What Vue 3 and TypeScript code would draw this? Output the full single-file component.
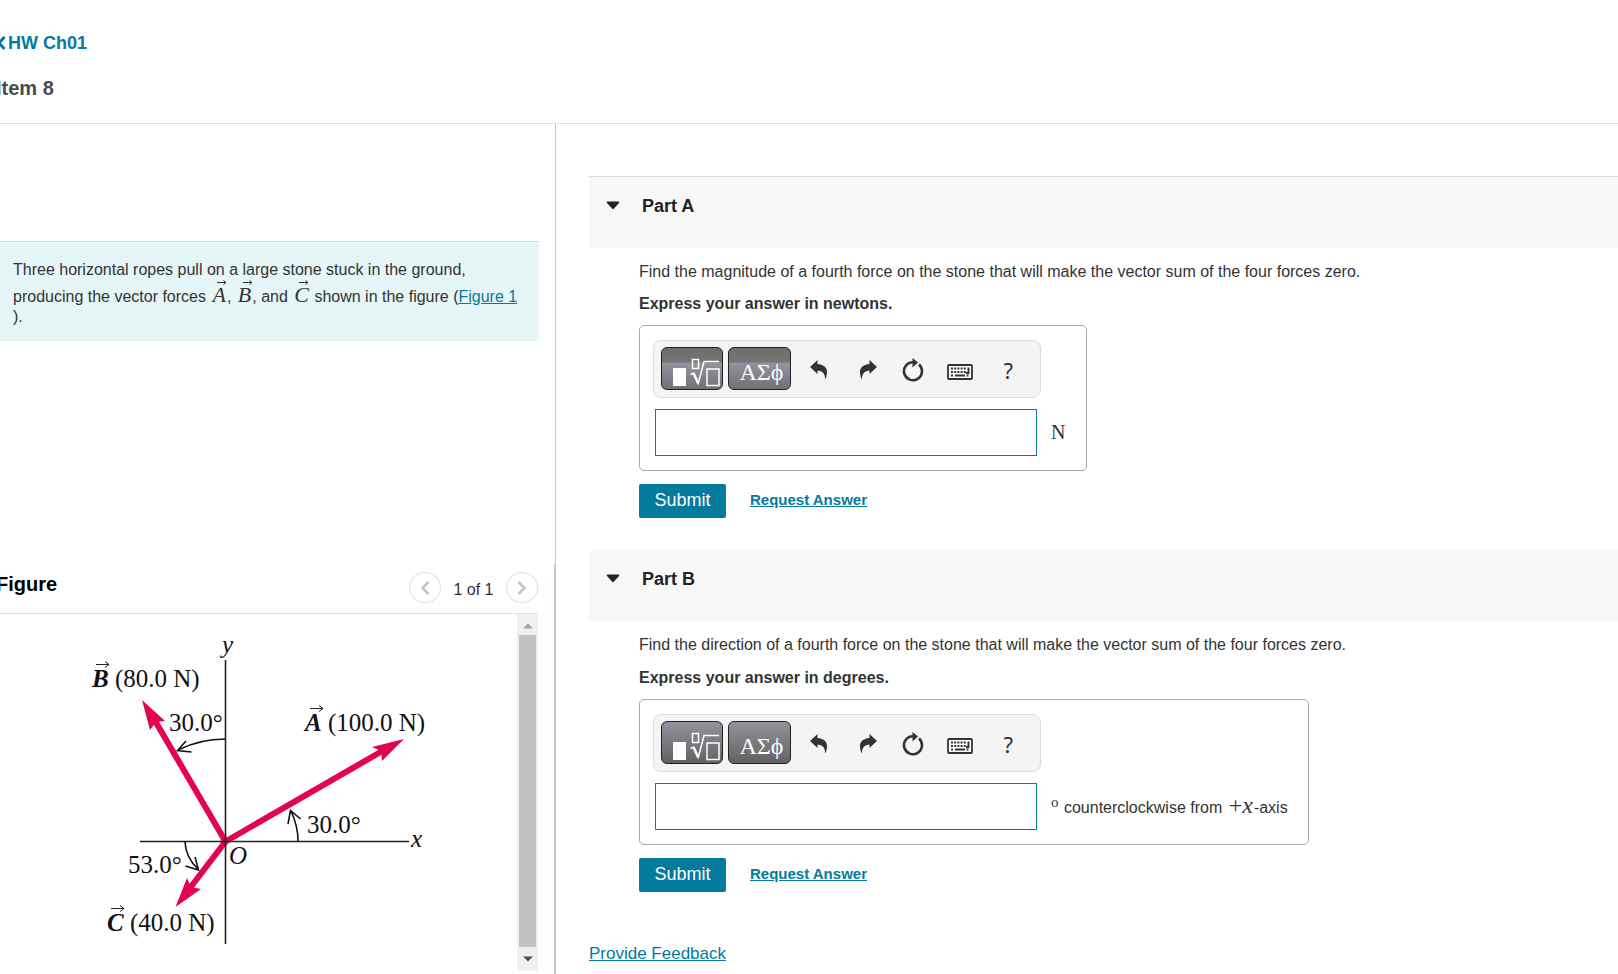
<script setup lang="ts">
import { ref } from 'vue'

interface Part {
  id: string
  title: string
  question: string
  instruction: string
  answer: string
}

const parts = ref<Part[]>([
  {
    id: 'a',
    title: 'Part A',
    question:
      'Find the magnitude of a fourth force on the stone that will make the vector sum of the four forces zero.',
    instruction: 'Express your answer in newtons.',
    answer: '',
  },
  {
    id: 'b',
    title: 'Part B',
    question:
      'Find the direction of a fourth force on the stone that will make the vector sum of the four forces zero.',
    instruction: 'Express your answer in degrees.',
    answer: '',
  },
])
</script>

<template>
  <div class="page">
    <header class="top">
      <a href="#" class="back">
        <svg width="10" height="16" viewBox="0 0 10 16" aria-hidden="true">
          <path d="M8.500 2 L3 8 L8.500 14" fill="none" stroke="currentColor" stroke-width="3" />
        </svg>
        <span>HW Ch01</span>
      </a>
      <h1 class="item">Item 8</h1>
    </header>

    <div class="columns">
      <aside class="left">
        <section class="upper">
          <div class="intro">
            Three horizontal ropes pull on a large stone stuck in the ground,<br />
            producing the vector forces
            <span class="vec">A<svg class="arrow" viewBox="0 0 10 5"><path d="M0 2.500H9M6.500 0.500L9 2.500L6.500 4.500" /></svg></span>,
            <span class="vec">B<svg class="arrow" viewBox="0 0 10 5"><path d="M0 2.500H9M6.500 0.500L9 2.500L6.500 4.500" /></svg></span>,
            and
            <span class="vec">C<svg class="arrow" viewBox="0 0 10 5"><path d="M0 2.500H9M6.500 0.500L9 2.500L6.500 4.500" /></svg></span>
            shown in the figure (<a href="#figure">Figure 1</a><br />).
          </div>
        </section>

        <section id="figure" class="figure">
          <div class="figure-head">
            <h2>Figure</h2>
            <div class="pager">
              <button type="button" class="round" aria-label="Previous figure">
                <svg width="12" height="16" viewBox="0 0 12 16"><path d="M9.500 2L3.500 8L9.500 14" /></svg>
              </button>
              <span class="count">1 of 1</span>
              <button type="button" class="round" aria-label="Next figure">
                <svg width="12" height="16" viewBox="0 0 12 16"><path d="M2.500 2L8.500 8L2.500 14" /></svg>
              </button>
            </div>
          </div>
          <div class="figure-body">
            <svg class="diagram" width="440" height="356" viewBox="0 614 440 356" role="img" aria-label="Vector forces A, B and C">
              <g class="axis">
                <path d="M225.500 660V944" />
                <path d="M140 841.500H409" />
              </g>
              <g class="force">
                <path d="M225.500 841.500L384 750" />
                <path d="M225.500 841.500L154 719" />
                <path d="M225.500 841.500L190 888" />
              </g>
              <g class="tips">
                <path d="M404 739L382 761L381 751L372 747Z" />
                <path d="M142 700L165 721L156 722L150 730Z" />
                <path d="M175.500 907L187 878L191 887L201 889Z" />
              </g>
              <path class="axis" d="M220 841.500H231M225.500 836V847" />
              <g class="angle">
                <path d="M225 739Q200 739 178 750M186 741L177.500 750.500L191.500 752" />
                <path d="M298 841Q298 826 291 811M288 824L290.500 810.500L300.500 819" />
                <path d="M185 842Q186 858 198 869M185.500 866L198.500 870L195 857" />
              </g>
              <g class="small-arrow">
                <path d="M96 664.500H109M105 661.500L109 664.500L105 667.500" />
                <path d="M310 708.500H323M319 705.500L323 708.500L319 711.500" />
                <path d="M111 908.500H124M120 905.500L124 908.500L120 911.500" />
              </g>
              <g class="label">
                <text x="222" y="653" class="it">y</text>
                <text x="411" y="847" class="it">x</text>
                <text x="229" y="864" class="it">O</text>
                <text x="92" y="687"><tspan class="bold">B</tspan> (80.0 N)</text>
                <text x="305" y="731"><tspan class="bold">A</tspan> (100.0 N)</text>
                <text x="107" y="931"><tspan class="bold">C</tspan> (40.0 N)</text>
                <text x="169" y="731">30.0°</text>
                <text x="307" y="833">30.0°</text>
                <text x="128" y="873">53.0°</text>
              </g>
            </svg>
            <div class="scrollbar" aria-hidden="true">
              <svg width="10" height="6" viewBox="0 0 10 6"><path d="M0 5.500L5 0.500L10 5.500Z" fill="#a3a3a3" /></svg>
              <div class="thumb"></div>
              <svg width="10" height="6" viewBox="0 0 10 6"><path d="M0 0.500L5 5.500L10 0.500Z" fill="#505050" /></svg>
            </div>
          </div>
        </section>
      </aside>

      <main class="right">
        <section v-for="part in parts" :key="part.id" :class="['part', 'part-' + part.id]">
          <h2 class="part-head">
            <svg width="14" height="9" viewBox="0 0 14 9" aria-hidden="true">
              <path d="M1.500 0.500H12.500Q14 0.500 13 2L8 7.500Q7 8.500 6 7.500L1 2Q0 0.500 1.500 0.500Z" fill="#222" />
            </svg>
            {{ part.title }}
          </h2>
          <div class="part-body">
            <p class="question">{{ part.question }}</p>
            <label class="instruction" :for="'answer-' + part.id">{{ part.instruction }}</label>
            <div class="answer-box">
              <div class="toolbar">
                <button type="button" class="dark" aria-label="Templates">
                  <svg width="60" height="40" viewBox="0 0 60 40">
                    <rect x="11" y="20" width="13" height="18" fill="#fff" />
                    <g fill="none" stroke="#fff">
                      <rect x="30.500" y="11.500" width="6" height="9" stroke-width="1.500" />
                      <path d="M28.500 26.500L32 25" stroke-width="1.500" />
                      <path d="M31.500 25L36 35" stroke-width="2.500" />
                      <path d="M36 36.500L42 13.500H57" stroke-width="1.500" />
                      <rect x="45" y="21" width="12" height="16.500" stroke-width="1.500" />
                    </g>
                  </svg>
                </button>
                <button type="button" class="dark symbols">ΑΣϕ</button>
                <button type="button" class="tool undo" aria-label="Undo">
                  <svg width="18" height="20" viewBox="0 0 18 20">
                    <path d="M0 7L7.500 0V4C14 4.500 17.500 8 17 13Q16.800 17 15 19.500Q15.500 11 7.500 10.500V14Z" fill="#333" />
                  </svg>
                </button>
                <button type="button" class="tool redo" aria-label="Redo">
                  <svg width="18" height="20" viewBox="0 0 18 20">
                    <path d="M18 7L10.500 0V4C4 4.500 0.500 8 1 13Q1.200 17 3 19.500Q2.500 11 10.500 10.500V14Z" fill="#333" />
                  </svg>
                </button>
                <button type="button" class="tool reset" aria-label="Reset">
                  <svg width="22" height="24" viewBox="0 0 22 24">
                    <path d="M17 6.500A9 9 0 1 1 11 4.200" fill="none" stroke="#333" stroke-width="2.600" />
                    <path d="M10.500 0L16 4.500L10.500 9.500Z" fill="#333" />
                  </svg>
                </button>
                <button type="button" class="tool keys" aria-label="Keyboard">
                  <svg width="26" height="16" viewBox="0 0 26 16">
                    <rect x="1" y="1" width="24" height="14" rx="1" fill="#fff" stroke="#333" stroke-width="1.800" />
                    <path d="M4 4.500H19M4 8H19M4 11.500H6M19.500 11.500H22" stroke="#333" stroke-width="2" stroke-dasharray="2 1.200" />
                    <path d="M8 11.500H18M21.500 3.500V9H19" fill="none" stroke="#333" stroke-width="2" />
                  </svg>
                </button>
                <button type="button" class="tool help" aria-label="Help">?</button>
              </div>
              <div class="entry">
                <input :id="'answer-' + part.id" v-model="part.answer" type="text" />
                <span v-if="part.id === 'a'" class="unit">N</span>
                <span v-else class="unit-text"><sup>o</sup> counterclockwise from <span class="math">+<i>x</i></span>-axis</span>
              </div>
            </div>
            <div class="actions">
              <button type="button" class="submit">Submit</button>
              <a href="#" class="request">Request Answer</a>
            </div>
          </div>
        </section>
        <a href="#" class="feedback">Provide Feedback</a>
      </main>
    </div>
  </div>
</template>

<style>
body {
  background: #fff;
}
</style>

<style scoped>
.page {
  height: 100vh;
  display: flex;
  flex-direction: column;
  overflow: hidden;
  font-family: "Liberation Sans", Arial, sans-serif;
  font-size: 16px;
  line-height: 20px;
  color: #333;
}
.page * {
  box-sizing: border-box;
}
a {
  color: #047a9c;
}
h1,
h2,
p {
  margin: 0;
}
button {
  font: inherit;
  padding: 0;
  border: 0;
  background: none;
  cursor: pointer;
}
.top {
  flex: none;
  border-bottom: 1px solid #dcdee0;
  padding: 33px 0 23px;
  display: flex;
  flex-direction: column;
  align-items: flex-start;
  gap: 23px;
  margin-left: -4px;
}
.back {
  display: flex;
  align-items: center;
  gap: 2px;
  font-size: 18px;
  font-weight: bold;
  text-decoration: none;
}
.item {
  font-size: 20px;
  line-height: 24px;
  color: #4b4b4b;
}
.columns {
  flex: 1;
  min-height: 0;
  display: flex;
}
.left {
  flex: none;
  width: 556px;
  display: flex;
  flex-direction: column;
}
.upper {
  height: 440px;
  flex: none;
  padding: 117px 16px 0 0;
  border-right: 1px solid #b8c9dc;
}
.intro {
  border-top: 1px solid #d5dfe0;
  background: #e6f6f7;
  padding: 18px 0 14px 13px;
  height: 100px;
  white-space: nowrap;
}
.vec {
  display: inline-block;
  position: relative;
  margin: 0 1px 0 2px;
  padding-top: 5px;
  font-family: "Liberation Serif", serif;
  font-style: italic;
  font-size: 22px;
  line-height: 20px;
}
.arrow {
  position: absolute;
  left: 5px;
  top: 0;
  width: 10px;
  height: 5px;
}
.arrow path {
  fill: none;
  stroke: #333;
}
.figure {
  flex: 1;
  min-height: 0;
  border-right: 2px solid #b8c9dc;
  padding: 8px 16px 3px 0;
  display: flex;
  flex-direction: column;
}
.figure-head {
  height: 42px;
  border-bottom: 1px solid #dcdee0;
  display: flex;
  justify-content: space-between;
  align-items: flex-start;
  margin-left: -4px;
}
.figure-head h2 {
  font-size: 20px;
  line-height: 24px;
  color: #000;
}
.pager {
  display: flex;
  align-items: center;
}
.round {
  width: 32px;
  height: 31px;
  border: 1px solid #e2e2e2;
  border-radius: 50%;
  display: flex;
  align-items: center;
  justify-content: center;
}
.round path {
  fill: none;
  stroke: #c4c4c4;
  stroke-width: 2.5;
}
.count {
  width: 65px;
  padding-top: 5px;
  text-align: center;
}
.figure-body {
  flex: 1;
  min-height: 0;
  display: flex;
  justify-content: space-between;
}
.diagram {
  flex: none;
}
.axis {
  fill: none;
  stroke: #222;
  stroke-width: 1.6;
}
.force {
  fill: none;
  stroke: #e2044e;
  stroke-width: 6;
}
.tips {
  fill: #e2044e;
}
.angle {
  fill: none;
  stroke: #111;
  stroke-width: 1.6;
}
.small-arrow {
  fill: none;
  stroke: #222;
  stroke-width: 1;
}
.label {
  font-family: "Liberation Serif", "Times New Roman", serif;
  font-size: 25px;
  fill: #111;
}
.it {
  font-style: italic;
}
.bold {
  font-style: italic;
  font-weight: bold;
}
.scrollbar {
  width: 21px;
  background: #f0f0f0;
  display: flex;
  flex-direction: column;
  align-items: center;
  justify-content: space-between;
  padding: 9px 2px;
}
.thumb {
  flex: 1;
  margin: 6px 0 9px;
  width: 17px;
  background: #c1c1c1;
}
.right {
  flex: 1;
  min-width: 0;
  padding: 52px 0 0 33px;
  display: flex;
  flex-direction: column;
  align-items: stretch;
}
.part-head {
  display: flex;
  align-items: flex-start;
  gap: 22px;
  padding: 18px 0 0 17px;
  height: 70px;
  background: #f8f8f8;
  font-size: 18px;
  color: #222;
}
.part-a .part-head {
  border-top: 1px solid #dcdcdc;
  height: 72px;
  padding-top: 19px;
}
.part-head svg {
  margin-top: 5px;
}
.part-body {
  padding: 14px 0 33px 50px;
}
.instruction {
  display: block;
  margin: 12px 0 11px;
  font-weight: bold;
}
.part-b .instruction {
  margin-top: 13px;
}
.answer-box {
  width: fit-content;
  border: 1px solid #a9a9a9;
  border-radius: 5px;
  padding: 14px 20px 14px 13px;
}
.toolbar {
  width: 388px;
  height: 58px;
  border: 1px solid #dcdcdc;
  border-radius: 8px;
  background: #f4f4f4;
  display: flex;
  align-items: center;
  padding: 0 27px 2px 7px;
}
.dark {
  width: 62px;
  height: 43px;
  border: 1px solid #222;
  border-radius: 6px;
  background: linear-gradient(#94929c, #626262);
  color: #fff;
}
.part-a .dark {
  background: linear-gradient(#6e6e6e 0, #757575 14px, #94929c 15px, #727176 100%);
}
.dark svg {
  display: block;
}
.symbols {
  width: 63px;
  margin-left: 5px;
  padding: 7px 0 0 4px;
  font-family: "Liberation Serif", serif;
  font-size: 24px;
}
.tool {
  padding-top: 4px;
}
.tool svg {
  display: block;
}
.undo {
  margin-left: 19px;
}
.redo {
  margin-left: 31px;
}
.reset {
  margin-left: 25px;
}
.keys {
  margin: 4px 0 0 23px;
}
.help {
  margin-left: auto;
  font-family: "Noto Sans", sans-serif;
  font-size: 22px;
  color: #333;
}
.entry {
  display: flex;
  align-items: center;
  margin: 11px 0 0 2px;
}
.entry input {
  width: 382px;
  height: 47px;
  border: 1px solid #047a9c;
  padding: 0 8px;
  font: inherit;
  outline: none;
}
.unit {
  margin: 0 1px 2px 14px;
  font-family: "Liberation Serif", serif;
  font-size: 20px;
}
.unit-text {
  margin-left: 14px;
}
.unit-text sup {
  font-family: "Liberation Serif", serif;
  font-size: 15px;
  line-height: 12px;
  margin-right: 1px;
}
.math {
  margin: 0 1px 0 2px;
  font-family: "Liberation Serif", serif;
  font-size: 24px;
  line-height: 20px;
}
.actions {
  display: flex;
  align-items: center;
  gap: 24px;
  margin-top: 13px;
}
.submit {
  width: 87px;
  height: 34px;
  padding-bottom: 2px;
  border-radius: 2px;
  background: #047a9c;
  color: #fff;
  font-size: 18px;
}
.request {
  padding-bottom: 2px;
  font-size: 15px;
  font-weight: bold;
}
.feedback {
  align-self: flex-start;
  margin-top: 19px;
  font-size: 17px;
}
</style>
